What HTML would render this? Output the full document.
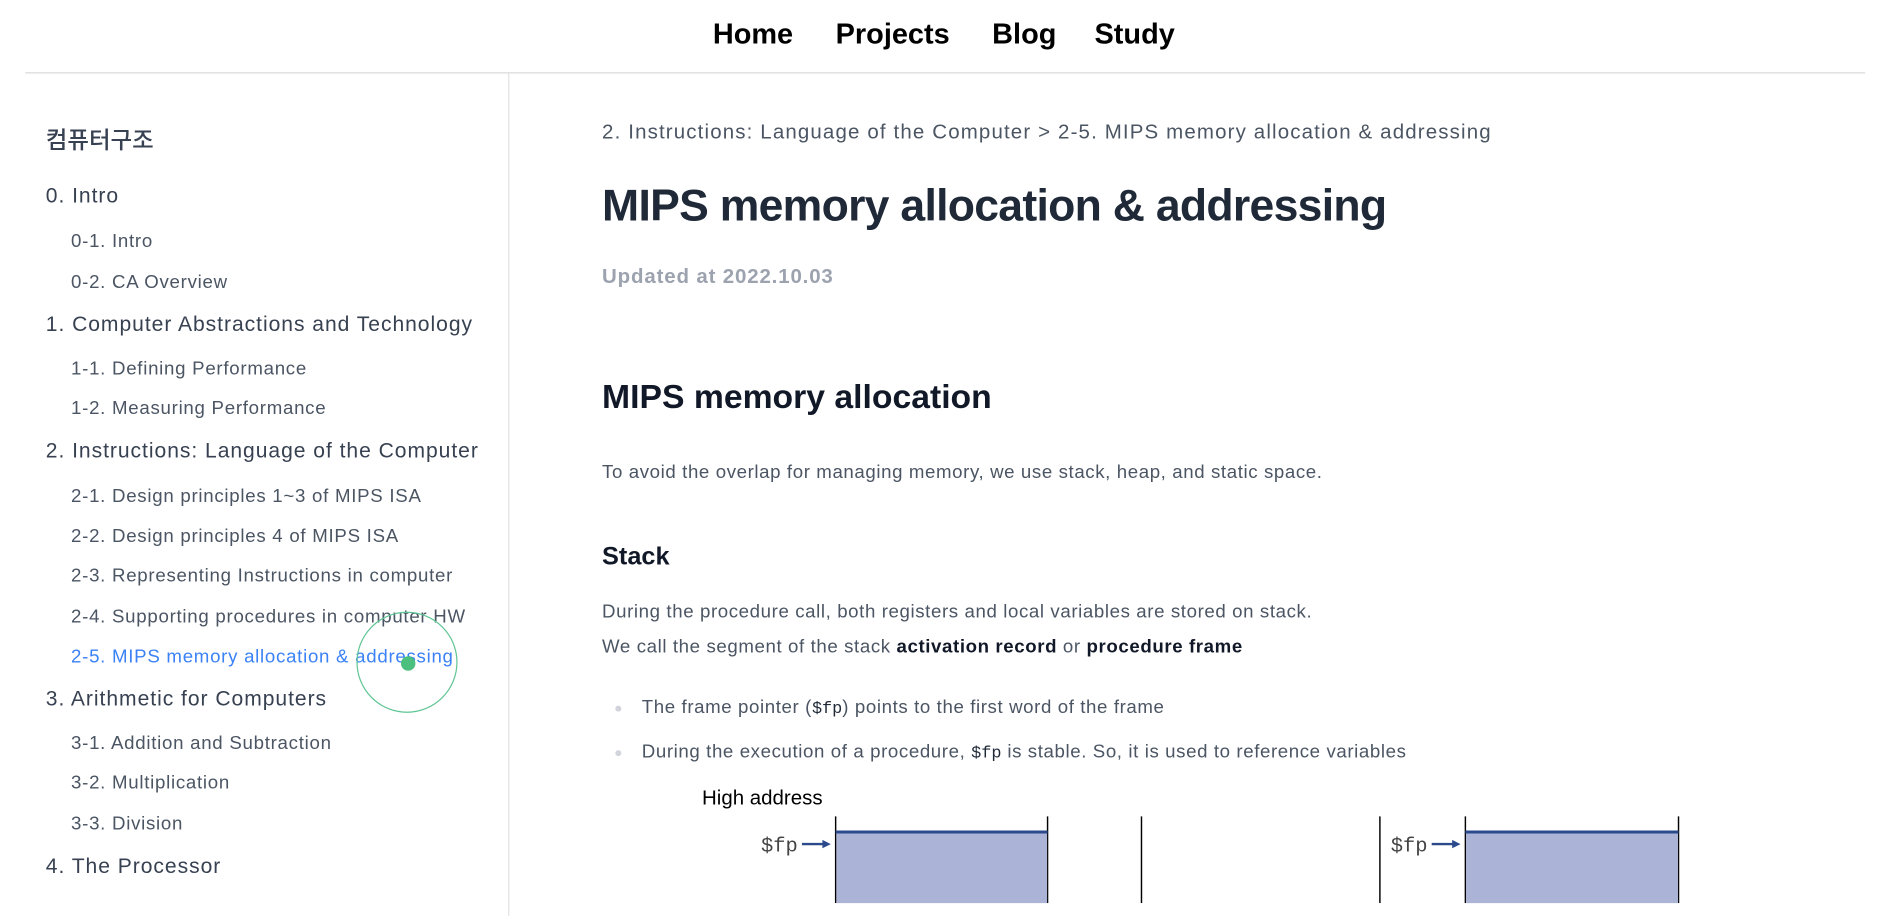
<!DOCTYPE html>
<html><head><meta charset="utf-8"><style>
html,body{margin:0;padding:0;background:#fff;overflow:hidden;width:1888px;height:895px}
#w{position:absolute;left:0;top:0;width:1568px;height:743px;transform:scale(1.2041);transform-origin:0 0;font-family:"Liberation Sans","Noto Sans CJK KR",sans-serif}
.a{position:absolute;white-space:nowrap;line-height:1}
.nav{font-size:24px;font-weight:bold;color:#000;top:17px}
.sec{left:38px;font-size:17.5px;color:#374151;letter-spacing:0.8px}
.sub{left:59px;font-size:15.5px;color:#4b5563;letter-spacing:0.6px}
.p{font-size:15.5px;color:#4b5563;left:500px;letter-spacing:0.5px}
code{font-family:"Liberation Mono",monospace;font-size:14px;color:#1f2937;letter-spacing:0}
b{color:#111827;font-weight:bold}
</style></head><body><div id="w">
<div class="a nav" style="left:592px">Home</div>
<div class="a nav" style="left:694px">Projects</div>
<div class="a nav" style="left:824px">Blog</div>
<div class="a nav" style="left:909px">Study</div>
<div class="a" style="left:21px;top:60px;width:1528px;height:1px;background:#d9d9d9"></div>
<div class="a" style="left:422px;top:61px;width:1px;height:700px;background:#e2e2e2"></div>

<div class="a" style="left:38px;top:108px;font-size:19.5px;color:#374151;font-weight:500">컴퓨터구조</div>
<div class="a sec" style="top:154px">0. Intro</div>
<div class="a sub" style="top:193px">0-1. Intro</div>
<div class="a sub" style="top:227px">0-2. CA Overview</div>
<div class="a sec" style="top:261px">1. Computer Abstractions and Technology</div>
<div class="a sub" style="top:299px">1-1. Defining Performance</div>
<div class="a sub" style="top:332px">1-2. Measuring Performance</div>
<div class="a sec" style="top:366px">2. Instructions: Language of the Computer</div>
<div class="a sub" style="top:405px">2-1. Design principles 1~3 of MIPS ISA</div>
<div class="a sub" style="top:438px">2-2. Design principles 4 of MIPS ISA</div>
<div class="a sub" style="top:471px">2-3. Representing Instructions in computer</div>
<div class="a sub" style="top:505px">2-4. Supporting procedures in computer HW</div>
<div class="a sub" style="top:538px;color:#3b82f6">2-5. MIPS memory allocation &amp; addressing</div>
<div class="a sec" style="top:572px">3. Arithmetic for Computers</div>
<div class="a sub" style="top:610px">3-1. Addition and Subtraction</div>
<div class="a sub" style="top:643px">3-2. Multiplication</div>
<div class="a sub" style="top:677px">3-3. Division</div>
<div class="a sec" style="top:711px">4. The Processor</div>
<div class="a" style="left:296px;top:508px;width:82px;height:82px;border:1px solid #5fc594;border-radius:50%"></div>
<div class="a" style="left:333px;top:545px;width:12px;height:12px;background:#4bbf7e;border-radius:50%"></div>

<div class="a p" style="top:101px;font-size:17px;letter-spacing:0.95px">2. Instructions: Language of the Computer &gt; 2-5. MIPS memory allocation &amp; addressing</div>
<div class="a" style="left:500px;top:152px;font-size:37px;font-weight:bold;color:#1f2937;letter-spacing:-0.6px">MIPS memory allocation &amp; addressing</div>
<div class="a" style="left:500px;top:221px;font-size:17px;font-weight:bold;color:#9ca3af;letter-spacing:0.7px">Updated at 2022.10.03</div>
<div class="a" style="left:500px;top:316px;font-size:28px;font-weight:bold;color:#111827">MIPS memory allocation</div>
<div class="a p" style="top:385px">To avoid the overlap for managing memory, we use stack, heap, and static space.</div>
<div class="a" style="left:500px;top:452px;font-size:21px;font-weight:bold;color:#111827">Stack</div>
<div class="a p" style="top:501px">During the procedure call, both registers and local variables are stored on stack.</div>
<div class="a p" style="top:530px">We call the segment of the stack <b>activation record</b> or <b>procedure frame</b></div>
<div class="a" style="left:511px;top:586px;width:5px;height:5px;border-radius:50%;background:#d1d5db"></div>
<div class="a p" style="left:533px;top:580px">The frame pointer (<code>$fp</code>) points to the first word of the frame</div>
<div class="a" style="left:511px;top:623px;width:5px;height:5px;border-radius:50%;background:#d1d5db"></div>
<div class="a p" style="left:533px;top:617px">During the execution of a procedure, <code>$fp</code> is stable. So, it is used to reference variables</div>

<div class="a" style="left:583px;top:654px;font-size:17px;color:#000">High address</div>
<svg class="a" style="left:560px;top:670px" width="900" height="80">
<g stroke="#000" stroke-width="1.2"><line x1="134" y1="8" x2="134" y2="80"/><line x1="310" y1="8" x2="310" y2="80"/><line x1="388" y1="8" x2="388" y2="80"/><line x1="586" y1="8" x2="586" y2="80"/><line x1="657" y1="8" x2="657" y2="80"/><line x1="834" y1="8" x2="834" y2="80"/></g>
<rect x="134.6" y="21" width="175" height="60" fill="#abb3d6"/><rect x="657.6" y="21" width="176" height="60" fill="#abb3d6"/>
<line x1="134" y1="21" x2="310" y2="21" stroke="#2b4a8c" stroke-width="2.5"/><line x1="657" y1="21" x2="834" y2="21" stroke="#2b4a8c" stroke-width="2.5"/>
<text x="72" y="37" font-family="Liberation Mono,monospace" font-size="17" fill="#444">$fp</text>
<text x="595" y="37" font-family="Liberation Mono,monospace" font-size="17" fill="#444">$fp</text>
<g stroke="#2b4a8c" stroke-width="2" fill="#2b4a8c"><line x1="106" y1="31" x2="124" y2="31"/><path d="M130 31 L123 27.5 L123 34.5Z" stroke="none"/><line x1="629" y1="31" x2="647" y2="31"/><path d="M653 31 L646 27.5 L646 34.5Z" stroke="none"/></g>
</svg>
</div></body></html>
